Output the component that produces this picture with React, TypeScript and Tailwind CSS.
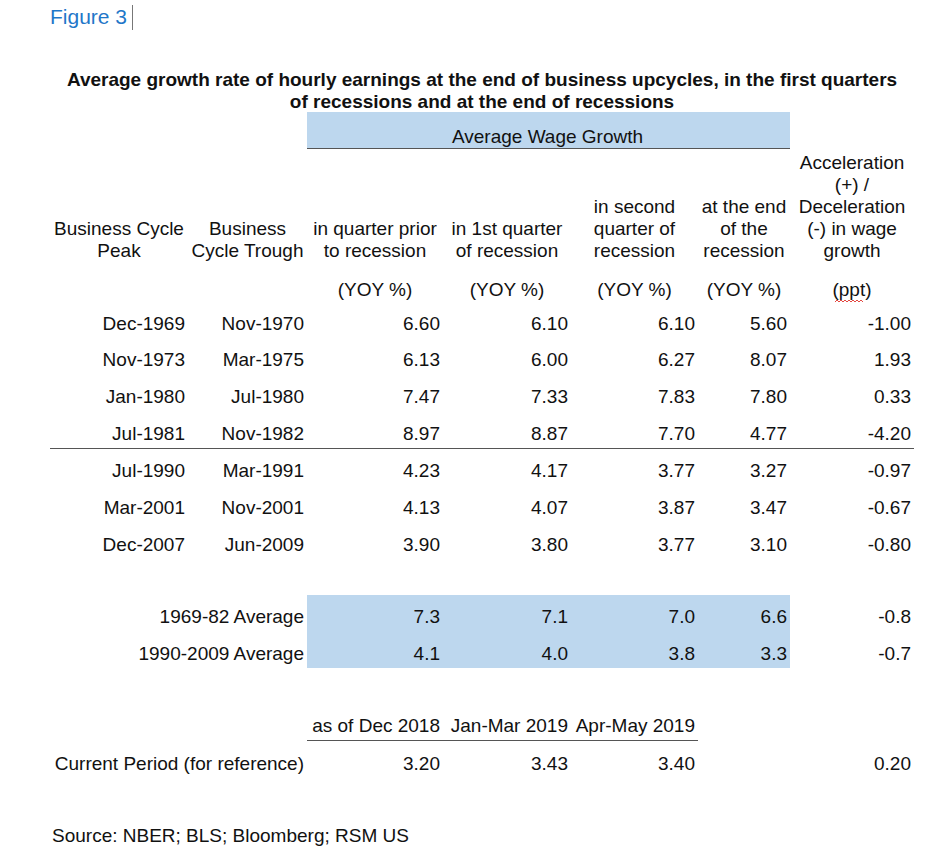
import React from 'react';

const grid = 'grid grid-cols-[138px_119px_136px_128px_127px_92px_124px]';
const band = 'bg-[#bdd7ee]';

const rows = [
  ['Dec-1969', 'Nov-1970', '6.60', '6.10', '6.10', '5.60', '-1.00'],
  ['Nov-1973', 'Mar-1975', '6.13', '6.00', '6.27', '8.07', '1.93'],
  ['Jan-1980', 'Jul-1980', '7.47', '7.33', '7.83', '7.80', '0.33'],
  ['Jul-1981', 'Nov-1982', '8.97', '8.87', '7.70', '4.77', '-4.20'],
  ['Jul-1990', 'Mar-1991', '4.23', '4.17', '3.77', '3.27', '-0.97'],
  ['Mar-2001', 'Nov-2001', '4.13', '4.07', '3.87', '3.47', '-0.67'],
  ['Dec-2007', 'Jun-2009', '3.90', '3.80', '3.77', '3.10', '-0.80'],
];

const averages = [
  ['1969-82 Average', '7.3', '7.1', '7.0', '6.6', '-0.8'],
  ['1990-2009 Average', '4.1', '4.0', '3.8', '3.3', '-0.7'],
];

const cell = 'h-[36.67px] flex items-end justify-end pb-[3px] pr-[3px] whitespace-nowrap';

const Head = ({ lines }: { lines: string[] }) => (
  <div className="pt-[3px] flex flex-col justify-end items-center text-center whitespace-nowrap">
    {lines.map((l, i) => (
      <div key={i}>{l}</div>
    ))}
  </div>
);

const Squiggle = () => (
  <svg className="absolute left-[3px] bottom-[-3px]" width="28" height="4" viewBox="0 0 28 4" fill="none">
    <path d="M0 3 L2 1 L4 3 L6 1 L8 3 L10 1 L12 3 L14 1 L16 3 L18 1 L20 3 L22 1 L24 3 L26 1 L28 3" stroke="#e0342c" strokeWidth="0.9" />
  </svg>
);

export default function App() {
  return (
    <div className="min-h-screen w-[950px] bg-white text-[#111] font-['Liberation_Sans',Arial,sans-serif] text-[19px] leading-[22px]">
      <div className="pl-[50px] pt-[5px] flex items-center h-[29px]">
        <span className="text-[21px] leading-[24px] text-[#1f77c9]">Figure 3</span>
        <span className="ml-[5px] w-px h-[25px] bg-[#777]"></span>
      </div>

      <div className="w-[864px] ml-[50px]">
        <h1 className="mt-[40px] text-center font-bold text-[19px] leading-[22px]">
          Average growth rate of hourly earnings at the end of business upcycles, in the first quarters
          <br />
          of recessions and at the end of recessions
        </h1>

        <div className={`${grid} -mt-px`}>
          <div className="col-span-2"></div>
          <div className={`col-span-4 h-[37px] ${band} border-b border-[#555] flex items-end justify-center`}>
            <span className="pr-[2px]">Average Wage Growth</span>
          </div>
          <div></div>

          <Head lines={['Business Cycle', 'Peak']} />
          <Head lines={['Business', 'Cycle Trough']} />
          <Head lines={['in quarter prior', 'to recession']} />
          <Head lines={['in 1st quarter', 'of recession']} />
          <Head lines={['in second', 'quarter of', 'recession']} />
          <Head lines={['at the end', 'of the', 'recession']} />
          <Head lines={['Acceleration', '(+) /', 'Deceleration', '(-) in wage', 'growth']} />

          <div></div>
          <div></div>
          <div className="pt-[17px] text-center">(YOY %)</div>
          <div className="pt-[17px] text-center">(YOY %)</div>
          <div className="pt-[17px] text-center">(YOY %)</div>
          <div className="pt-[17px] text-center">(YOY %)</div>
          <div className="pt-[17px] text-center">
            <span className="relative">
              (ppt)
              <Squiggle />
            </span>
          </div>
        </div>

        {rows.map((r, i) => (
          <div key={i} className={`${grid} ${i === 3 ? 'border-b border-[#555]' : ''}`}>
            {r.map((v, j) => (
              <div key={j} className={cell}>
                {v}
              </div>
            ))}
          </div>
        ))}

        <div className="h-[36px]"></div>

        {averages.map((r, i) => (
          <div key={i} className={grid}>
            <div className={`col-span-2 ${cell}`}>{r[0]}</div>
            {r.slice(1, 5).map((v, j) => (
              <div key={j} className={`${cell} ${band}`}>
                {v}
              </div>
            ))}
            <div className={cell}>{r[5]}</div>
          </div>
        ))}

        <div className="h-[36.67px]"></div>

        <div className={grid}>
          <div className="col-span-2"></div>
          <div className={`${cell} border-b border-[#555]`}>as of Dec 2018</div>
          <div className={`${cell} border-b border-[#555]`}>Jan-Mar 2019</div>
          <div className={`${cell} border-b border-[#555]`}>Apr-May 2019</div>
          <div></div>
          <div></div>
        </div>

        <div className={grid}>
          <div className={`col-span-2 ${cell}`}>Current Period (for reference)</div>
          <div className={cell}>3.20</div>
          <div className={cell}>3.43</div>
          <div className={cell}>3.40</div>
          <div className={cell}></div>
          <div className={cell}>0.20</div>
        </div>
      </div>

      <div className="pl-[52px] mt-[47px]">Source: NBER; BLS; Bloomberg; RSM US</div>
    </div>
  );
}
